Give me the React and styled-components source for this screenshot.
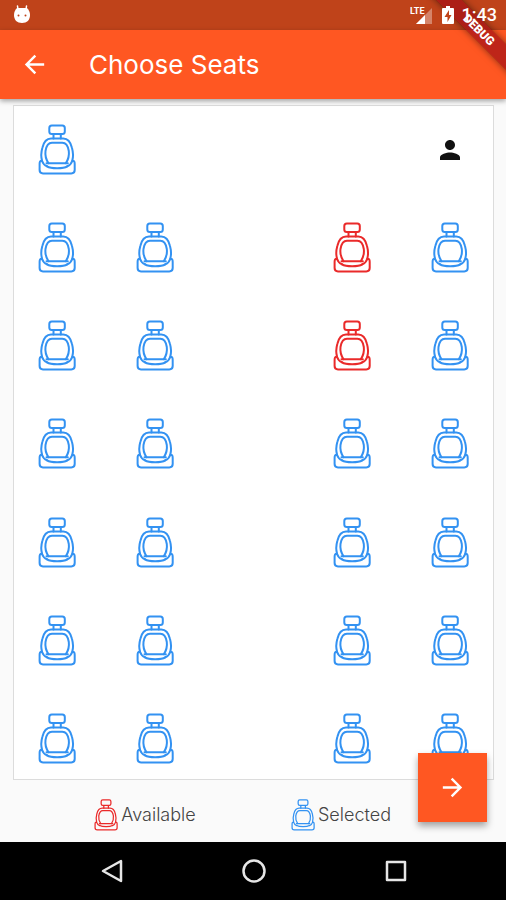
import React from "react";
import styled, { createGlobalStyle } from "styled-components";

const GlobalStyle = createGlobalStyle`
  *, *::before, *::after { box-sizing: border-box; }
  body { margin: 0; background: #fafafa; font-family: Inter, "Open Sans", sans-serif; }
  button { border: 0; padding: 0; margin: 0; background: none; font: inherit; color: inherit; cursor: pointer; }
`;

const Screen = styled.div`
  position: relative;
  display: flex;
  flex-direction: column;
  min-height: 100vh;
  overflow: hidden;
`;

const StatusBar = styled.div`
  display: flex;
  align-items: center;
  justify-content: space-between;
  height: 30px;
  padding: 0 9px 0 12px;
  background: #bf431a;
  color: #fff;
`;

const StatusIcons = styled.div`
  position: relative;
  z-index: 3;
  display: flex;
  align-items: center;
  gap: 8px;
`;

const Clock = styled.span`
  font: 500 18px/30px Roboto, sans-serif;
`;

const AppBar = styled.header`
  display: flex;
  align-items: center;
  gap: 40px;
  height: 69px;
  padding: 0 20px;
  background: #ff5722;
  color: #fff;
  box-shadow: 0 2px 5px rgba(0, 0, 0, 0.36);
  z-index: 1;
`;

const BackButton = styled.button`
  display: flex;
  width: 29px;
  height: 29px;
`;

const Title = styled.h1`
  margin: 0;
  font-size: 26px;
  line-height: 32px;
  font-weight: 400;
`;

const Content = styled.main`
  position: relative;
  flex: 1;
  display: flex;
  flex-direction: column;
  padding: 6px 12px 0 13px;
`;

const SeatCard = styled.section`
  flex: 1;
  display: flex;
  flex-direction: column;
  justify-content: space-between;
  gap: 16px;
  padding: 18px 24px 15px;
  background: #fff;
  border: 1px solid #dcdcdc;
`;

const SeatRow = styled.div`
  display: flex;
  justify-content: space-between;
`;

const Cell = styled.div`
  display: flex;
  align-items: center;
  justify-content: center;
  width: 38px;
  height: 51px;
`;

const tones = { blue: "#3392f2", red: "#ea2a2a" };

const SeatButton = styled.button`
  display: flex;
  color: ${(p) => tones[p.$tone]};
`;

const Legend = styled.div`
  display: flex;
  height: 62px;
  padding: 8px 55px 0 34px;
`;

const LegendItem = styled.div`
  flex: 1;
  display: flex;
  align-items: center;
  justify-content: center;
  gap: 3px;
  color: #444;
  font-size: 18px;
  line-height: 24px;
  font-weight: 300;
`;

const LegendIcon = styled.span`
  display: flex;
  color: ${(p) => tones[p.$tone]};
`;

const NextButton = styled.button`
  position: absolute;
  right: 19px;
  bottom: 20px;
  display: flex;
  align-items: center;
  justify-content: center;
  width: 69px;
  height: 69px;
  background: #ff5722;
  color: #fff;
  box-shadow: 0 4px 7px rgba(0, 0, 0, 0.36);
`;

const NavBar = styled.nav`
  display: flex;
  align-items: center;
  justify-content: center;
  gap: 112px;
  height: 58px;
  padding-left: 2px;
  background: #000;
`;

const NavButton = styled.button`
  display: flex;
  width: 30px;
  height: 30px;
`;

const RibbonClip = styled.div`
  position: absolute;
  top: 0;
  right: 0;
  width: 80px;
  height: 80px;
  overflow: hidden;
  pointer-events: none;
  z-index: 2;
`;

const Ribbon = styled.div`
  position: absolute;
  top: 21px;
  right: -48px;
  width: 150px;
  height: 18px;
  background: rgba(165, 18, 22, 0.72);
  box-shadow: 0 0 7px rgba(0, 0, 0, 0.5);
  color: #fff;
  font: 900 12px/18px Roboto, sans-serif;
  text-align: center;
  transform: rotate(45deg);
`;

function SeatIcon({ width = 38, height = 51 }) {
  return (
    <svg width={width} height={height} viewBox="0 0 38 51" fill="none" stroke="currentColor" strokeWidth="2" strokeLinejoin="round" strokeLinecap="round" aria-hidden="true">
      <rect x="11.300" y="1.500" width="15.500" height="8.600" rx="2.500" />
      <path d="M15.500 10.500v4M22.800 10.500v4" />
      <path d="M4 36.500C3 33 3.200 28 4.300 24C5.500 19 7.500 14.600 13 14.600H25.300C30.800 14.600 32.800 19 34 24C35.100 28 35.300 33 34.300 36.500" />
      <path d="M10.500 39.200C8 35.500 7 31 7.500 27C8.200 22.500 9.500 18.700 14 18.700H24.300C28.800 18.700 30.100 22.500 30.800 27C31.300 31 30.300 35.500 27.800 39.200" />
      <path d="M8.500 39.300H29.800" />
      <path d="M9 42.300C13 44.800 25.300 44.800 29.300 42.300" />
      <path d="M4 36.800C2 36.600 1.600 38 1.600 40V46C1.600 48.500 2.800 49.400 5 49.400H33.300C35.500 49.400 36.700 48.500 36.700 46V40C36.700 38 36.300 36.600 34.300 36.800C33.500 39.500 31.500 41.500 29.300 42.300M4 36.800C4.800 39.500 6.800 41.500 9 42.300" />
    </svg>
  );
}

const ArrowIcon = ({ size = 29, flip }) => (
  <svg width={size} height={size} viewBox="0 0 24 24" fill="currentColor" aria-hidden="true">
    {flip ? (
      <path d="M20 11H7.830l5.590-5.590L12 4l-8 8 8 8 1.410-1.410L7.830 13H20z" />
    ) : (
      <path d="M12 4l-1.410 1.410L16.170 11H4v2h12.170l-5.580 5.590L12 20l8-8z" />
    )}
  </svg>
);

const rows = ["b...d", "bb.rb", "bb.rb", "bb.bb", "bb.bb", "bb.bb", "bb.bb"];

function SeatCell({ kind, label }) {
  if (kind === "d") {
    return (
      <Cell role="img" aria-label="Driver">
        <svg width="30" height="30" viewBox="0 0 24 24" fill="#111">
          <path d="M12 12c2.210 0 4-1.790 4-4s-1.790-4-4-4-4 1.790-4 4 1.790 4 4 4zm0 2c-2.670 0-8 1.340-8 4v2h16v-2c0-2.660-5.330-4-8-4z" />
        </svg>
      </Cell>
    );
  }
  if (kind === ".") return <Cell />;
  return (
    <Cell>
      <SeatButton $tone={kind === "r" ? "red" : "blue"} aria-label={label}>
        <SeatIcon />
      </SeatButton>
    </Cell>
  );
}

export default function App() {
  return (
    <Screen>
      <GlobalStyle />
      <StatusBar>
        <svg width="20" height="22" viewBox="0 0 20 22" aria-hidden="true">
          <path d="M6 6L5.500 2M14 6l.5-4" stroke="#fff" strokeWidth="1.500" strokeLinecap="round" />
          <path d="M5 4h10c2 2 3 4 3 7 0 5-3 8-8 8s-8-3-8-8c0-3 1-5 3-7z" fill="#fff" />
          <circle cx="6.500" cy="11.500" r="1" fill="#bf431a" />
          <circle cx="13.500" cy="11.500" r="1" fill="#bf431a" />
        </svg>
        <StatusIcons>
          <svg width="24" height="22" viewBox="0 0 24 22" aria-hidden="true">
            <path d="M22 4v16H6z" fill="#fff" opacity=".35" />
            <path d="M15 11v9H6z" fill="#fff" />
            <text x="0" y="10" fill="#fff" fontFamily="Roboto, sans-serif" fontSize="9" fontWeight="700">LTE</text>
          </svg>
          <svg width="12" height="20" viewBox="0 0 12 20" aria-hidden="true">
            <path d="M4 1h4v2h3a1 1 0 011 1v14a1 1 0 01-1 1H1a1 1 0 01-1-1V4a1 1 0 011-1h3z" fill="#fff" />
            <path d="M7 5L2.500 12H5.500v5L9.500 10H7z" fill="#bf431a" />
          </svg>
          <Clock>1:43</Clock>
        </StatusIcons>
      </StatusBar>
      <AppBar>
        <BackButton aria-label="Back"><ArrowIcon flip /></BackButton>
        <Title>Choose Seats</Title>
      </AppBar>
      <Content>
        <SeatCard aria-label="Seats">
          {rows.map((row, r) => (
            <SeatRow key={r}>
              {[...row].map((kind, c) => (
                <SeatCell key={c} kind={kind} label={`Row ${r + 1}, seat ${c + 1}`} />
              ))}
            </SeatRow>
          ))}
        </SeatCard>
        <Legend>
          <LegendItem>
            <LegendIcon $tone="red"><SeatIcon width={24} height={32} /></LegendIcon>
            Available
          </LegendItem>
          <LegendItem>
            <LegendIcon $tone="blue"><SeatIcon width={24} height={32} /></LegendIcon>
            Selected
          </LegendItem>
        </Legend>
        <NextButton aria-label="Next"><ArrowIcon /></NextButton>
      </Content>
      <NavBar>
        <NavButton aria-label="Back">
          <svg width="30" height="30" viewBox="0 0 30 30" fill="none" stroke="#e6e6e6" strokeWidth="2.500" strokeLinejoin="round">
            <path d="M24 5v20L6 15z" />
          </svg>
        </NavButton>
        <NavButton aria-label="Home">
          <svg width="30" height="30" viewBox="0 0 30 30" fill="none" stroke="#e6e6e6" strokeWidth="2.500">
            <circle cx="15" cy="15" r="10.500" />
          </svg>
        </NavButton>
        <NavButton aria-label="Recent apps">
          <svg width="30" height="30" viewBox="0 0 30 30" fill="none" stroke="#e6e6e6" strokeWidth="2.500" strokeLinejoin="round">
            <rect x="6" y="6" width="18" height="18" />
          </svg>
        </NavButton>
      </NavBar>
      <RibbonClip>
        <Ribbon>DEBUG</Ribbon>
      </RibbonClip>
    </Screen>
  );
}
